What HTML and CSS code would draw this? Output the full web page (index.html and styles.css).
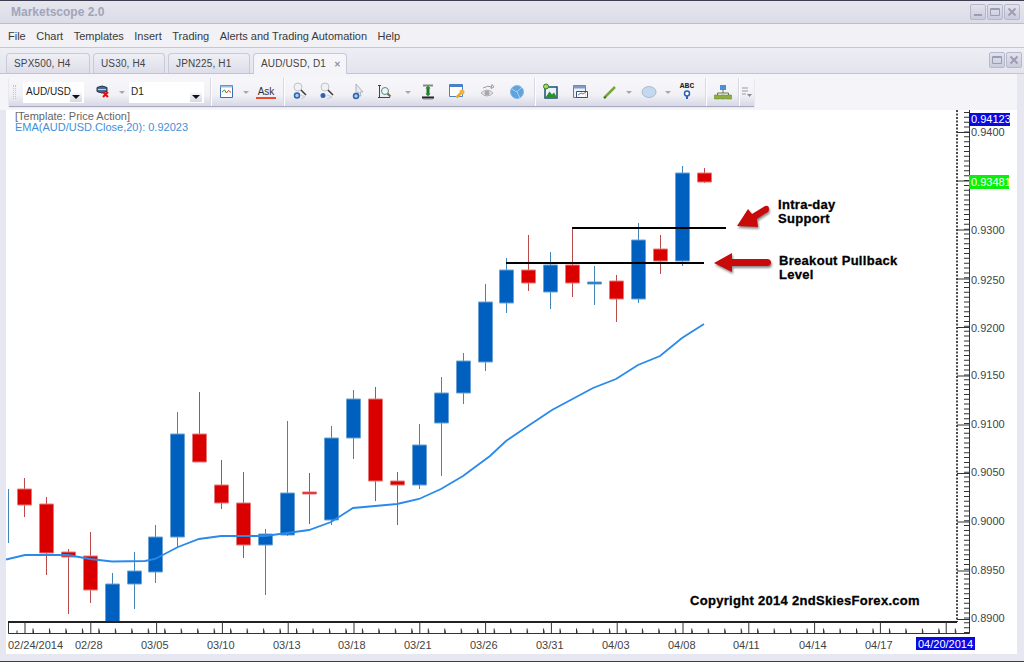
FILE: index.html
```html
<!DOCTYPE html>
<html lang="en">
<head>
    <meta charset="UTF-8">
    <meta name="viewport" content="width=device-width, initial-scale=1.0">
    <title>Marketscope 2.0</title>
    <link rel="stylesheet" href="styles.css">
</head>
<body>

<div class="window">
    <div class="titlebar">
        <span class="app-name">Marketscope 2.0</span>
        <div class="win-buttons">
            <span class="win-btn"><svg width="16" height="16"><path d="M4 11h8" class="glyph" stroke-width="2"/></svg></span>
            <span class="win-btn"><svg width="16" height="16"><path d="M3.5 4.5h9v7h-9zM3.5 5.5h9" class="glyph"/></svg></span>
            <span class="win-btn"><svg width="16" height="16"><path d="M4.5 4.5l7 7M11.5 4.5l-7 7" class="glyph" stroke-width="2"/></svg></span>
        </div>
    </div>

    <div class="menubar">
        <span>File</span>
        <span>Chart</span>
        <span>Templates</span>
        <span>Insert</span>
        <span>Trading</span>
        <span>Alerts and Trading Automation</span>
        <span>Help</span>
    </div>

    <div class="tabbar">
        <div class="tab tab-spx">SPX500, H4</div>
        <div class="tab tab-us">US30, H4</div>
        <div class="tab tab-jpn">JPN225, H1</div>
        <div class="tab tab-active">AUD/USD, D1 <span class="tab-close">&#10005;</span></div>
        <div class="win-buttons panel-buttons">
            <span class="win-btn"><svg width="16" height="16"><path d="M3.5 4.5h9v7h-9zM3.5 5.5h9" class="glyph"/></svg></span>
            <span class="win-btn"><svg width="16" height="16"><path d="M4.5 4.5l7 7M11.5 4.5l-7 7" class="glyph" stroke-width="2"/></svg></span>
        </div>
    </div>

    <div class="toolbar-row">
        <div class="toolbar">
            <span class="grip"></span>
            <div class="combo combo-symbol">AUD/USD<span class="combo-arrow"></span></div>
            <svg class="icon ml-9" viewBox="0 0 20 20">
                <path d="M4 5.500q5-3 10 0v4q-5 3-10 0z" fill="#4a6a90" stroke="#25344f"/>
                <path d="M5 7.500h8" stroke="#c6d3e4"/>
                <path d="M10 10l5 5M15 10l-5 5" stroke="#e01010" stroke-width="2"/>
            </svg>
            <span class="drop ml-6"></span>
            <div class="combo combo-period">D1<span class="combo-arrow"></span></div>
            <span class="sep ml-6"></span>
            <svg class="icon ml-6" viewBox="0 0 20 20">
                <path d="M3.500 3.500h12v12h-12z" fill="#fff" stroke="#3a6fb0"/>
                <path d="M3.500 3.500h12v2h-12z" fill="#9dbde0"/>
                <path d="M5 10l2.500-2 2 3" fill="none" stroke="#2f9a35"/>
                <path d="M9.500 11l2-2.500 2.500 2" fill="none" stroke="#d04030"/>
            </svg>
            <span class="drop ml-6"></span>
            <div class="ask ml-7">Ask</div>
            <span class="sep ml-7"></span>
            <svg class="icon ml-6" viewBox="0 0 20 20">
                <circle cx="8" cy="5" r="4" fill="#f0f1f5" stroke="#c0c3cc"/>
                <path d="M11 8l5 5" stroke="#3a3a3a" stroke-width="1.500"/>
                <circle cx="7" cy="13.500" r="2.500" fill="#b5ccea" stroke="#2c63b5" stroke-width="1.500"/>
                <path d="M11 13l4 2-4 2" fill="none" stroke="#c9ccd6"/>
            </svg>
            <svg class="icon ml-7" viewBox="0 0 20 20">
                <circle cx="8" cy="5" r="4" fill="#f0f1f5" stroke="#c0c3cc"/>
                <path d="M11 8l5 5" stroke="#3a3a3a" stroke-width="1.500"/>
                <circle cx="6" cy="13.500" r="2.500" fill="#2c63b5"/>
                <path d="M10 13l5 2-5 2" fill="none" stroke="#c9ccd6"/>
            </svg>
            <svg class="icon ml-11" viewBox="0 0 20 20">
                <path d="M8 2l7 8-3 0 1 4-2 0-1-4-2 2z" fill="#e9eaef" stroke="#b0b3bd"/>
                <circle cx="8" cy="14" r="2.500" fill="#b5ccea" stroke="#2c63b5" stroke-width="1.500"/>
            </svg>
            <svg class="icon ml-7" viewBox="0 0 20 20">
                <path d="M4.500 4v11M3 3.500h3M3 15.500h12" fill="none" stroke="#444"/>
                <circle cx="10" cy="9" r="3.500" fill="#eef6f6" stroke="#4f8a8c"/>
                <path d="M12.500 11.500l3 3" stroke="#8a6a2a" stroke-width="2"/>
            </svg>
            <span class="drop ml-10"></span>
            <svg class="icon ml-7" viewBox="0 0 20 20">
                <path d="M5 3.500h10" stroke="#8a8a8a" stroke-width="2"/>
                <path d="M10 5v8" stroke="#1f7a2e" stroke-width="3"/>
                <path d="M7.500 6.500l2.500-3 2.500 3zM7.500 11.500l2.500 3 2.500-3z" fill="#2d8a36"/>
                <path d="M4 15.500h12" stroke="#222" stroke-width="2"/>
                <path d="M5 17.500h10" stroke="#b5b6c0"/>
            </svg>
            <svg class="icon ml-9" viewBox="0 0 20 20">
                <path d="M2.500 2.500h13v12h-13z" fill="#fff" stroke="#4a82c8"/>
                <path d="M2.500 2.500h13v2.500h-13z" fill="#4a82c8"/>
                <circle cx="15" cy="10" r="2.500" fill="#f2b33c"/>
                <path d="M13.500 11.500l-4 4" stroke="#eaa82e" stroke-width="2.500"/>
            </svg>
            <svg class="icon ml-11" viewBox="0 0 20 20">
                <path d="M3 11q6-6 12 0q-6 6-12 0z" fill="#e6e7ea" stroke="#b0b0b0"/>
                <circle cx="9" cy="11" r="2.500" fill="#a8a8a8"/>
                <path d="M5 6q5-3 9-1M14 2.500l2 2.500-3 1.500z" fill="none" stroke="#9a9a9a"/>
            </svg>
            <svg class="icon ml-9" viewBox="0 0 20 20">
                <circle cx="10" cy="10" r="6.500" fill="#5da4de" stroke="#86b8e2"/>
                <path d="M5 7l5 3 5-5M10 10l3 6" fill="none" stroke="#a7d0f0"/>
            </svg>
            <span class="sep ml-7"></span>
            <svg class="icon ml-6" viewBox="0 0 20 20">
                <path d="M4 5h12v11h-12z" fill="#e8f2fa" stroke="#1c4f72" stroke-width="1.500"/>
                <path d="M4.500 15.500l4-6 2.500 3 2-2 3 5z" fill="#2c8e2c"/>
                <circle cx="5" cy="4.500" r="2.500" fill="#a8d468" stroke="#3c7c28"/>
            </svg>
            <svg class="icon ml-9" viewBox="0 0 20 20">
                <path d="M3.500 3.500h12v12h-12z" fill="#eef1f7" stroke="#5b7bac"/>
                <path d="M3.500 3.500h12v3h-12z" fill="#7f9cc9"/>
                <path d="M6.500 9.500h11v6h-11z" fill="#fff" fill-opacity=".8" stroke="#33507e"/>
                <path d="M8 13l3-2 2 1 3-2" fill="none" stroke="#777"/>
            </svg>
            <svg class="icon ml-10" viewBox="0 0 20 20">
                <path d="M4 16l11-11" stroke="#76a63c" stroke-width="2.500"/>
                <path d="M4 16l2-1" stroke="#555" stroke-width="1.500"/>
            </svg>
            <span class="drop ml-6"></span>
            <svg class="icon ml-7" viewBox="0 0 20 20">
                <ellipse cx="10" cy="10" rx="7" ry="5.500" fill="#c4d9f0" stroke="#a8bdd2"/>
            </svg>
            <span class="drop ml-6"></span>
            <div class="abc ml-6">
                <span>ABC</span>
                <svg width="8" height="9"><circle cx="4" cy="3.500" r="2.500" fill="#fff" stroke="#2c63b5" stroke-width="1.500"/><path d="M4 6v3" stroke="#2c63b5" stroke-width="2"/></svg>
            </div>
            <span class="sep ml-8"></span>
            <svg class="icon ml-7" viewBox="0 0 20 20">
                <path d="M7 3h6v5h-6z" fill="#4a90d8"/>
                <path d="M10 8v3M4.500 13v-2h11v2" fill="none" stroke="#6a7a4a"/>
                <path d="M1.500 13h5v4h-5zM7.500 13h5v4h-5zM13.500 13h5v4h-5z" fill="#8fae3c" stroke="#6a8a2a" stroke-width=".6"/>
            </svg>
            <span class="sep ml-5"></span>
            <svg class="overflow" width="12" height="12" viewBox="0 0 12 12">
                <path d="M1 2h6M1 5h6M1 8h4" stroke="#9a9aa4"/>
                <path d="M6 8h5l-2.500 3z" fill="#8a8a96"/>
            </svg>
        </div>
    </div>

    <div class="chart-panel">
        <svg class="chart" viewBox="6 110 1011 544" width="1011" height="544">
            <defs>
                <clipPath id="plot"><rect x="6" y="110" width="951" height="512"/></clipPath>
            </defs>

            <text class="template" x="15" y="120">[Template: Price Action]</text>
            <text class="ema-label" x="15" y="131">EMA(AUD/USD.Close,20): 0.92023</text>

            <g clip-path="url(#plot)">
                <path class="wick-blue" d="M8.500 489V543M112.500 573V590M134.500 552V609M155.500 525V583M177.500 412V547M265.500 529V595M287.500 421V536M331.500 426V525M353.500 390V459M419.500 424V489M441.500 377V476M463.500 353V404M485.500 284V371M506.500 258V313M550.500 252V309M594.500 266V305M638.500 223V303M682.500 166V266"/>
                <path class="wick-red" d="M24.500 478V517M46.500 497V575M68.500 549V614M90.500 532V603M199.500 392V462M221.500 460V509M243.500 472V558M309.500 473V524M375.500 387V501M397.500 472V525M528.500 235V291M572.500 227V297M616.500 275V322M660.500 235V274M704.500 168V183"/>
                <path class="body-red" d="M17.500 489h14v16h-14zM39.500 504h14v49h-14zM61.500 552h14v5h-14zM83.500 556h14v34h-14zM192.500 434h14v28h-14zM214.500 485h14v18h-14zM236.500 503h14v42h-14zM302.500 492h14v2h-14zM368.500 399h14v82h-14zM390.500 481h14v4h-14zM521.500 270h14v13h-14zM565.500 265h14v18h-14zM609.500 281h14v18h-14zM653.500 249h14v12h-14zM697.500 173h14v9h-14z"/>
                <path class="body-blue" d="M105.500 584h14v42h-14zM127.500 571h14v13h-14zM148.500 537h14v35h-14zM170.500 434h14v103h-14zM258.500 534h14v11h-14zM280.500 493h14v42h-14zM324.500 438h14v82h-14zM346.500 399h14v39h-14zM412.500 445h14v40h-14zM434.500 393h14v30h-14zM456.500 361h14v32h-14zM478.500 302h14v60h-14zM499.500 270h14v33h-14zM543.500 265h14v27h-14zM587.500 282h14v2h-14zM631.500 240h14v59h-14zM675.500 173h14v88h-14z"/>
                <polyline class="ema" points="6,559.500 25,555 68,555 90,559 112,561.500 145,561 155,559 178,547 199,539 221,536 265,536 287,533 309,530 331,522 353,508 375,506 397,504 419,499 441,489 463,476 490,456 506,441 528,426 552,410 593,388 616,379 638,365 660,356 682,338 704,324"/>
            </g>

            <!-- levels drawn on top of the chart -->
            <path class="level" d="M572 228H726M506 263H704"/>
            <path class="arrow" d="M737 226L748 209 752 214 765 206Q769 205 769 209 769 212 766 213L757 219 758 227z"/>
            <path class="arrow" d="M714 263L732 253V259H767Q771 259 771 262.500 771 266 767 266H732V272z"/>
            <text class="note" x="778" y="209">Intra-day</text>
            <text class="note" x="778" y="223">Support</text>
            <text class="note" x="779" y="265">Breakout Pullback</text>
            <text class="note" x="779" y="279">Level</text>
            <text class="note" x="690" y="605">Copyright 2014 2ndSkiesForex.com</text>

            <!-- axes -->
            <path class="axis-dash" d="M957 110V622"/>
            <path class="axis" d="M969.500 110V633.500H8.500V622"/>
            <path class="axis-thick" d="M8 622H957"/>
            <path class="tick" stroke-width="1" d="M957 132.500H969M957 181H969M957 230H969M957 279H969M957 327.500H969M957 376H969M957 425H969M957 473.500H969M957 522H969M957 571H969M957 619.500H969"/>
            <path class="tick-y" d="M966.500 112V633"/>
            <path class="tick-major" d="M24.500 627.500H960"/>
            <path class="tick-mid" d="M32.500 631H960"/>
            <path class="tick-minor" d="M16.500 632H966"/>

            <text class="axis-label" x="971" y="136">0.9400</text>
            <text class="axis-label" x="971" y="234">0.9300</text>
            <text class="axis-label" x="971" y="284">0.9250</text>
            <text class="axis-label" x="971" y="332">0.9200</text>
            <text class="axis-label" x="971" y="379">0.9150</text>
            <text class="axis-label" x="971" y="428">0.9100</text>
            <text class="axis-label" x="971" y="476">0.9050</text>
            <text class="axis-label" x="971" y="525">0.9000</text>
            <text class="axis-label" x="971" y="574">0.8950</text>
            <text class="axis-label" x="971" y="622">0.8900</text>

            <rect class="tag-blue" x="969" y="113" width="41" height="13"/>
            <text class="tag-label" x="971" y="123">0.94123</text>
            <rect class="tag-green" x="969" y="175" width="40" height="14"/>
            <text class="tag-label" x="971" y="186">0.93481</text>

            <text class="axis-label" x="8" y="649">02/24/2014</text>
            <text class="axis-label" x="75" y="649">02/28</text>
            <text class="axis-label" x="141" y="649">03/05</text>
            <text class="axis-label" x="207" y="649">03/10</text>
            <text class="axis-label" x="273" y="649">03/13</text>
            <text class="axis-label" x="338" y="649">03/18</text>
            <text class="axis-label" x="404" y="649">03/21</text>
            <text class="axis-label" x="470" y="649">03/26</text>
            <text class="axis-label" x="536" y="649">03/31</text>
            <text class="axis-label" x="602" y="649">04/03</text>
            <text class="axis-label" x="668" y="649">04/08</text>
            <text class="axis-label" x="733" y="649">04/11</text>
            <text class="axis-label" x="799" y="649">04/14</text>
            <text class="axis-label" x="865" y="649">04/17</text>
            <rect class="tag-blue" x="916" y="637" width="59" height="13"/>
            <text class="tag-label" x="918" y="648">04/20/2014</text>
        </svg>
    </div>
</div>

</body>
</html>
```

FILE: styles.css
```css
body {
    margin: 0;
    padding: 0;
    font-family: "Liberation Sans", Arial, sans-serif;
    font-size: 11px;
    color: #333;
    overflow: hidden;
}
.window {
    width: 1024px;
    height: 662px;
    box-sizing: border-box;
    border-top: 1px solid #3c3e50;
    border-bottom: 1px solid #3c3e50;
    background-color: #e6e7f0;
    display: flex;
    flex-direction: column;
}

/* title bar */
.titlebar {
    height: 22px;
    flex: none;
    display: flex;
    align-items: center;
    padding: 0 4px 0 11px;
    background: linear-gradient(#e6e6ee, #dcdce7);
    border-bottom: 1px solid #bdbdcb;
}
.app-name {
    font-weight: bold;
    font-size: 12px;
    color: #a0a5bb;
}
.win-buttons {
    margin-left: auto;
    display: flex;
    gap: 1px;
}
.win-btn {
    width: 16px;
    height: 16px;
    box-sizing: border-box;
    border: 1px solid #b6b8cb;
    border-radius: 2px;
    background: linear-gradient(#e2e3ed, #c9cbdc);
    display: flex;
    align-items: center;
    justify-content: center;
}
.win-btn svg {
    flex: none;
}
.glyph {
    fill: none;
    stroke: #9b9eb3;
}

/* menu */
.menubar {
    height: 23px;
    flex: none;
    display: flex;
    align-items: center;
    gap: 10.5px;
    padding-left: 8px;
    background-color: #f1f1f6;
    border-bottom: 1px solid #c6c6d4;
    font-size: 11px;
    color: #3a3a3a;
}

/* tabs */
.tabbar {
    height: 26px;
    flex: none;
    box-sizing: border-box;
    display: flex;
    align-items: flex-end;
    gap: 3px;
    padding: 0 2px 0 6px;
    background: linear-gradient(#eeeff5, #e2e3ec);
    border-bottom: 1px solid #c3c4d1;
}
.tab {
    height: 20px;
    box-sizing: border-box;
    padding: 3px 0 0 7px;
    border: 1px solid #c9cad7;
    border-bottom: none;
    border-radius: 4px 4px 0 0;
    background: linear-gradient(#eff0f5, #dcddE8);
    color: #444;
    font-size: 10px;
    line-height: 14px;
    letter-spacing: .15px;
}
.tab-spx { width: 84px; }
.tab-us { width: 72px; }
.tab-jpn { width: 82px; }
.tab-active {
    width: 94px;
    height: 21px;
    margin-bottom: -1px;
    background: linear-gradient(#f6f6fa, #f3f3f8);
}
.tab-close {
    font-size: 8px;
    font-weight: bold;
    color: #8f92a4;
    margin-left: 5px;
}
.panel-buttons {
    align-self: flex-start;
    margin-top: 4px;
}

/* toolbar */
.toolbar-row {
    height: 36px;
    flex: none;
    box-sizing: border-box;
    padding: 4px 0 0 9px;
    margin: 0 7px 0 0;
    background-color: #f4f4f9;
}
.toolbar {
    width: 745px;
    height: 28px;
    display: flex;
    align-items: center;
    background: linear-gradient(#f7f7fb, #f1f1f6 60%, #d6d8e6);
    box-shadow: 0 1px 1px #a9abbd;
}
.grip {
    width: 3px;
    height: 14px;
    margin-left: 4px;
    margin-right: 4px;
    border-left: 1px dotted #c5c5d0;
    border-right: 1px dotted #c5c5d0;
    box-sizing: border-box;
}
.combo {
    height: 21px;
    box-sizing: border-box;
    background-color: #fff;
    position: relative;
    padding: 3px 0 0 2px;
    font-size: 10px;
    line-height: 13px;
    color: #222;
}
.combo-symbol {
    width: 61px;
    margin-left: 3px;
    padding-left: 3px;
}
.combo-period {
    width: 75px;
    margin-left: 4px;
}
.combo-arrow {
    position: absolute;
    right: 2px;
    bottom: 1px;
    width: 12px;
    height: 10px;
    background: linear-gradient(#fafafc, #d6d7e2);
}
.combo-arrow::after {
    content: "";
    position: absolute;
    left: 2px;
    top: 3px;
    border-left: 4px solid transparent;
    border-right: 4px solid transparent;
    border-top: 4px solid #111;
}
.icon {
    width: 20px;
    height: 20px;
    flex: none;
}
.drop {
    width: 0;
    height: 0;
    box-sizing: content-box;
    border-left: 3px solid transparent;
    border-right: 3px solid transparent;
    border-top: 3px solid #a5a7b4;
}
.sep {
    width: 1px;
    height: 28px;
    background-color: #d8d9e4;
    box-shadow: 1px 0 0 #fdfdff;
    flex: none;
}
.ask {
    width: 20px;
    text-align: center;
    font-size: 10px;
    line-height: 11px;
    color: #333;
    border-bottom: 2px solid #ee4a2a;
}
.abc {
    width: 20px;
    display: flex;
    flex-direction: column;
    align-items: center;
    font-family: "Liberation Mono", monospace;
    font-weight: bold;
    font-size: 8px;
    line-height: 8px;
    color: #222;
    margin-top: -3px;
}
.overflow {
    margin-left: 2px;
}
.ml-5 { margin-left: 5px; }
.ml-6 { margin-left: 6px; }
.ml-7 { margin-left: 7px; }
.ml-8 { margin-left: 8px; }
.ml-9 { margin-left: 9px; }
.ml-10 { margin-left: 10px; }
.ml-11 { margin-left: 11px; }

/* chart */
.chart-panel {
    flex: 1;
    min-height: 0;
    padding: 0 7px 6px 6px;
    background-color: #e6e7f0;
}
.chart {
    display: block;
    background-color: #fff;
}
.chart text {
    font-family: "Liberation Sans", Arial, sans-serif;
    font-size: 11px;
}
.chart .template { fill: #666; }
.chart .ema-label { fill: #3f8fd8; }
.chart .axis-label { fill: #444; }
.chart .tag-label { fill: #fff; }
.tag-blue { fill: #0a0ae0; }
.tag-green { fill: #0af00a; }
.chart .note {
    font-size: 13px;
    font-weight: bold;
    fill: #000;
    stroke: #000;
    stroke-width: .3px;
    letter-spacing: .3px;
}
.wick-blue {
    fill: none;
    stroke: #4384b6;
}
.wick-red {
    fill: none;
    stroke: #bb4a4a;
}
.body-blue {
    fill: #0060bf;
    stroke: #6ba2d3;
}
.body-red {
    fill: #db0000;
    stroke: #e57a7a;
}
.ema {
    fill: none;
    stroke: #2a8aea;
    stroke-width: 1.800;
}
.level {
    fill: none;
    stroke: #000;
    stroke-width: 2;
}
.arrow {
    fill: #c80a0a;
    filter: drop-shadow(1px 2px 1px rgba(0, 0, 0, .45));
}
.axis-dash {
    fill: none;
    stroke: #111;
    stroke-width: 1.500;
    stroke-dasharray: 2 1.500;
}
.axis {
    fill: none;
    stroke: #333;
}
.axis-thick {
    fill: none;
    stroke: #222;
    stroke-width: 2;
}
.tick {
    fill: none;
    stroke: #333;
}
.tick-y {
    fill: none;
    stroke: #333;
    stroke-width: 5;
    stroke-dasharray: 1 3.860;
}
.tick-major {
    stroke: #333;
    stroke-width: 11;
    stroke-dasharray: 1 64.800;
    fill: none;
}
.tick-mid {
    stroke: #333;
    stroke-width: 5;
    stroke-dasharray: 1 15.470;
    fill: none;
}
.tick-minor {
    stroke: #333;
    stroke-width: 3;
    stroke-dasharray: 1 15.470;
    fill: none;
}
```
